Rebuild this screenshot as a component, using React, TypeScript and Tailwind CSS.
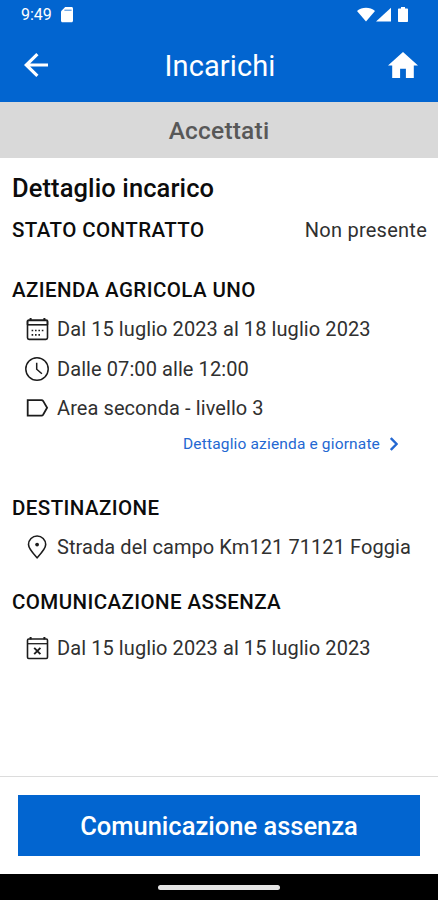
import React from 'react';

const stroke = {
  fill: 'none',
  stroke: 'currentColor',
  strokeWidth: 1.6,
};

const CalendarIcon = () => (
  <svg className="h-6 w-6" viewBox="0 0 24 24" {...stroke}>
    <path d="M2.5 7.5V4.6c0-.9.5-1.3 1.3-1.3h17.3c.9 0 1.4.4 1.4 1.3v2.9" strokeWidth="2" />
    <path d="M2.5 7v13.8c0 1 .6 1.6 1.6 1.6h16.8c1 0 1.6-.6 1.6-1.6V7" />
    <path d="M2.5 7.8h20" />
    <path d="M5.6 1v2.4M19.4 1v2.4" strokeWidth="2" />
    <path d="M6.6 13.5h1.6M10 13.5h1.6M13.4 13.5H15M16.8 13.5h1.6M6.6 17.9h1.6M10 17.9h1.6M13.4 17.9H15" strokeWidth="1.7" />
  </svg>
);

const ClockIcon = () => (
  <svg className="h-6 w-6" viewBox="0 0 24 24" {...stroke} strokeWidth={1.5}>
    <circle cx="12" cy="12" r="11.2" />
    <path d="M11.7 5.8v6.4l5.2 4.6" />
  </svg>
);

const LabelIcon = () => (
  <svg className="h-6 w-6" viewBox="0 0 24 24" {...stroke} strokeWidth={1.8}>
    <path d="M2.7 4.1h13.8c.7 0 1.2.2 1.6.8l4 6.9-4 7c-.4.6-.9.8-1.6.8H2.7z" />
  </svg>
);

const PinIcon = () => (
  <svg className="h-6 w-6" viewBox="0 0 24 24" {...stroke}>
    <path d="M12.1 22.8C8.6 19 3.5 13.8 3.5 9.6a8.6 8.6 0 0 1 17.2 0c0 4.2-5.1 9.4-8.6 13.2z" />
    <circle cx="12.1" cy="9.6" r="1.9" fill="currentColor" stroke="none" />
  </svg>
);

const CalendarOffIcon = () => (
  <svg className="h-6 w-6" viewBox="0 0 24 24" {...stroke}>
    <rect x="2.5" y="3" width="20" height="19.5" rx="1.2" />
    <path d="M2.5 7.7h20" strokeWidth="1.3" />
    <path d="M5.6 1v2.4M19.4 1v2.4" strokeWidth="2" />
    <path d="m9.2 11.9 6.2 6.2M15.4 11.9l-6.2 6.2" strokeWidth="1.9" />
  </svg>
);

const StatusBar = () => (
  <div className="flex h-[30px] items-center pr-[30px] pl-[21px] text-white">
    <span className="text-[16px] leading-none">9:49</span>
    <svg className="ml-[9px] h-4 w-3" viewBox="0 0 12 16" fill="currentColor">
      <path d="M4.2 0h6.3C11.4 0 12 .6 12 1.5v12.2c0 .9-.6 1.5-1.5 1.5h-9C.6 15.2 0 14.6 0 13.7V4.2z" />
      <path d="M3.4 3.2h7.2" stroke="#0265d0" strokeWidth="0.8" />
    </svg>
    <div className="ml-auto flex items-center">
      <svg className="h-4 w-[18px]" viewBox="0 0 18 16" fill="currentColor">
        <path d="M9 14.5 0 4C5-.2 13-.2 18 4z" />
      </svg>
      <svg className="ml-px h-4 w-[15px]" viewBox="0 0 15 16" fill="currentColor">
        <path d="M15 .8v13.7H0z" />
      </svg>
      <svg className="ml-[7px] h-4 w-[10px]" viewBox="0 0 10 16" fill="currentColor">
        <path d="M3 0h4v1.6h2c.6 0 1 .4 1 1v11.3c0 .6-.4 1-1 1H1c-.6 0-1-.4-1-1V2.6c0-.6.4-1 1-1h2z" />
      </svg>
    </div>
  </div>
);

const Header = () => (
  <div className="flex h-[72px] items-center justify-between pr-5 pl-6 text-white">
    <button aria-label="Indietro" className="-mt-0.5">
      <svg className="h-6 w-6" viewBox="0 0 24 24" fill="none" stroke="currentColor" strokeWidth="3.2">
        <path d="M24 12H2.2M13.4 1.2 2.2 12l11.2 10.8" />
      </svg>
    </button>
    <h1 className="pl-1 text-[29px] leading-none tracking-[0.1px]">Incarichi</h1>
    <button aria-label="Home" className="-mt-0.5">
      <svg className="h-[26px] w-[30px]" viewBox="0 0 30 26" fill="currentColor">
        <path d="M15 0 0 13.6h4.2V26h7.9v-9.3h5.8V26h7.9V13.6H30z" />
      </svg>
    </button>
  </div>
);

type RowProps = {
  icon: React.ReactNode;
  children: React.ReactNode;
};

const Row = ({ icon, children }: RowProps) => (
  <div className="flex h-6 items-center gap-2 pl-[13px]">
    <span className="shrink-0 text-[#1c1c1c]">{icon}</span>
    <span className="text-[20px] leading-6 tracking-[0.08px] whitespace-nowrap text-[#303030]">{children}</span>
  </div>
);

const SectionTitle = ({ children }: { children: React.ReactNode }) => (
  <h3 className="text-[20.5px] leading-6 font-medium tracking-[0.42px] whitespace-nowrap">{children}</h3>
);

export default function App() {
  return (
    <div className="flex h-[900px] w-[438px] flex-col overflow-hidden bg-white font-['Roboto',sans-serif] text-[#0c0c0c]">
      <header className="bg-[#0265d0]">
        <StatusBar />
        <Header />
      </header>
      <div className="flex h-14 items-center justify-center bg-[#d9d9d9] pt-0.5 text-[24.5px] font-medium tracking-[0.2px] text-[#585858]">
        Accettati
      </div>

      <main className="flex-1 px-3 pt-[14px]">
        <h2 className="text-[25.5px] leading-8 font-medium tracking-[0.1px]">Dettaglio incarico</h2>
        <div className="mt-[14px] flex items-center justify-between">
          <SectionTitle>STATO CONTRATTO</SectionTitle>
          <span className="-mr-px text-[20px] leading-6 tracking-[0.25px] text-[#303030]">Non presente</span>
        </div>

        <section className="mt-9">
          <SectionTitle>AZIENDA AGRICOLA UNO</SectionTitle>
          <div className="mt-[15px] flex flex-col gap-[15.5px]">
            <Row icon={<CalendarIcon />}>Dal 15 luglio 2023 al 18 luglio 2023</Row>
            <Row icon={<ClockIcon />}>Dalle 07:00 alle 12:00</Row>
            <Row icon={<LabelIcon />}>Area seconda - livello 3</Row>
          </div>
          <a className="mt-3 flex h-6 items-center justify-end pr-7 text-[#2468d2]">
            <span className="pt-0.5 text-[15.5px] tracking-[0.16px]">Dettaglio azienda e giornate</span>
            <svg className="ml-[10px] h-[14px] w-2" viewBox="0 0 8 14" fill="none" stroke="currentColor" strokeWidth="2.4">
              <path d="m.8 1 5.8 6-5.8 6" />
            </svg>
          </a>
        </section>

        <section className="mt-10">
          <SectionTitle>DESTINAZIONE</SectionTitle>
          <div className="mt-[15px]">
            <Row icon={<PinIcon />}>Strada del campo Km121 71121 Foggia</Row>
          </div>
        </section>

        <section className="mt-[31px]">
          <SectionTitle>COMUNICAZIONE ASSENZA</SectionTitle>
          <div className="mt-[22px]">
            <Row icon={<CalendarOffIcon />}>Dal 15 luglio 2023 al 15 luglio 2023</Row>
          </div>
        </section>
      </main>

      <footer className="border-t border-[#dcdcdc] px-[18px] pt-[18px] pb-[18px]">
        <button className="h-[61px] w-full bg-[#0265d0] pt-0.5 text-[25.5px] font-medium text-white">
          Comunicazione assenza
        </button>
      </footer>
      <div className="flex h-[26px] items-center justify-center bg-black">
        <div className="h-[5px] w-[122px] rounded-full bg-[#e4e4e4]" />
      </div>
    </div>
  );
}
